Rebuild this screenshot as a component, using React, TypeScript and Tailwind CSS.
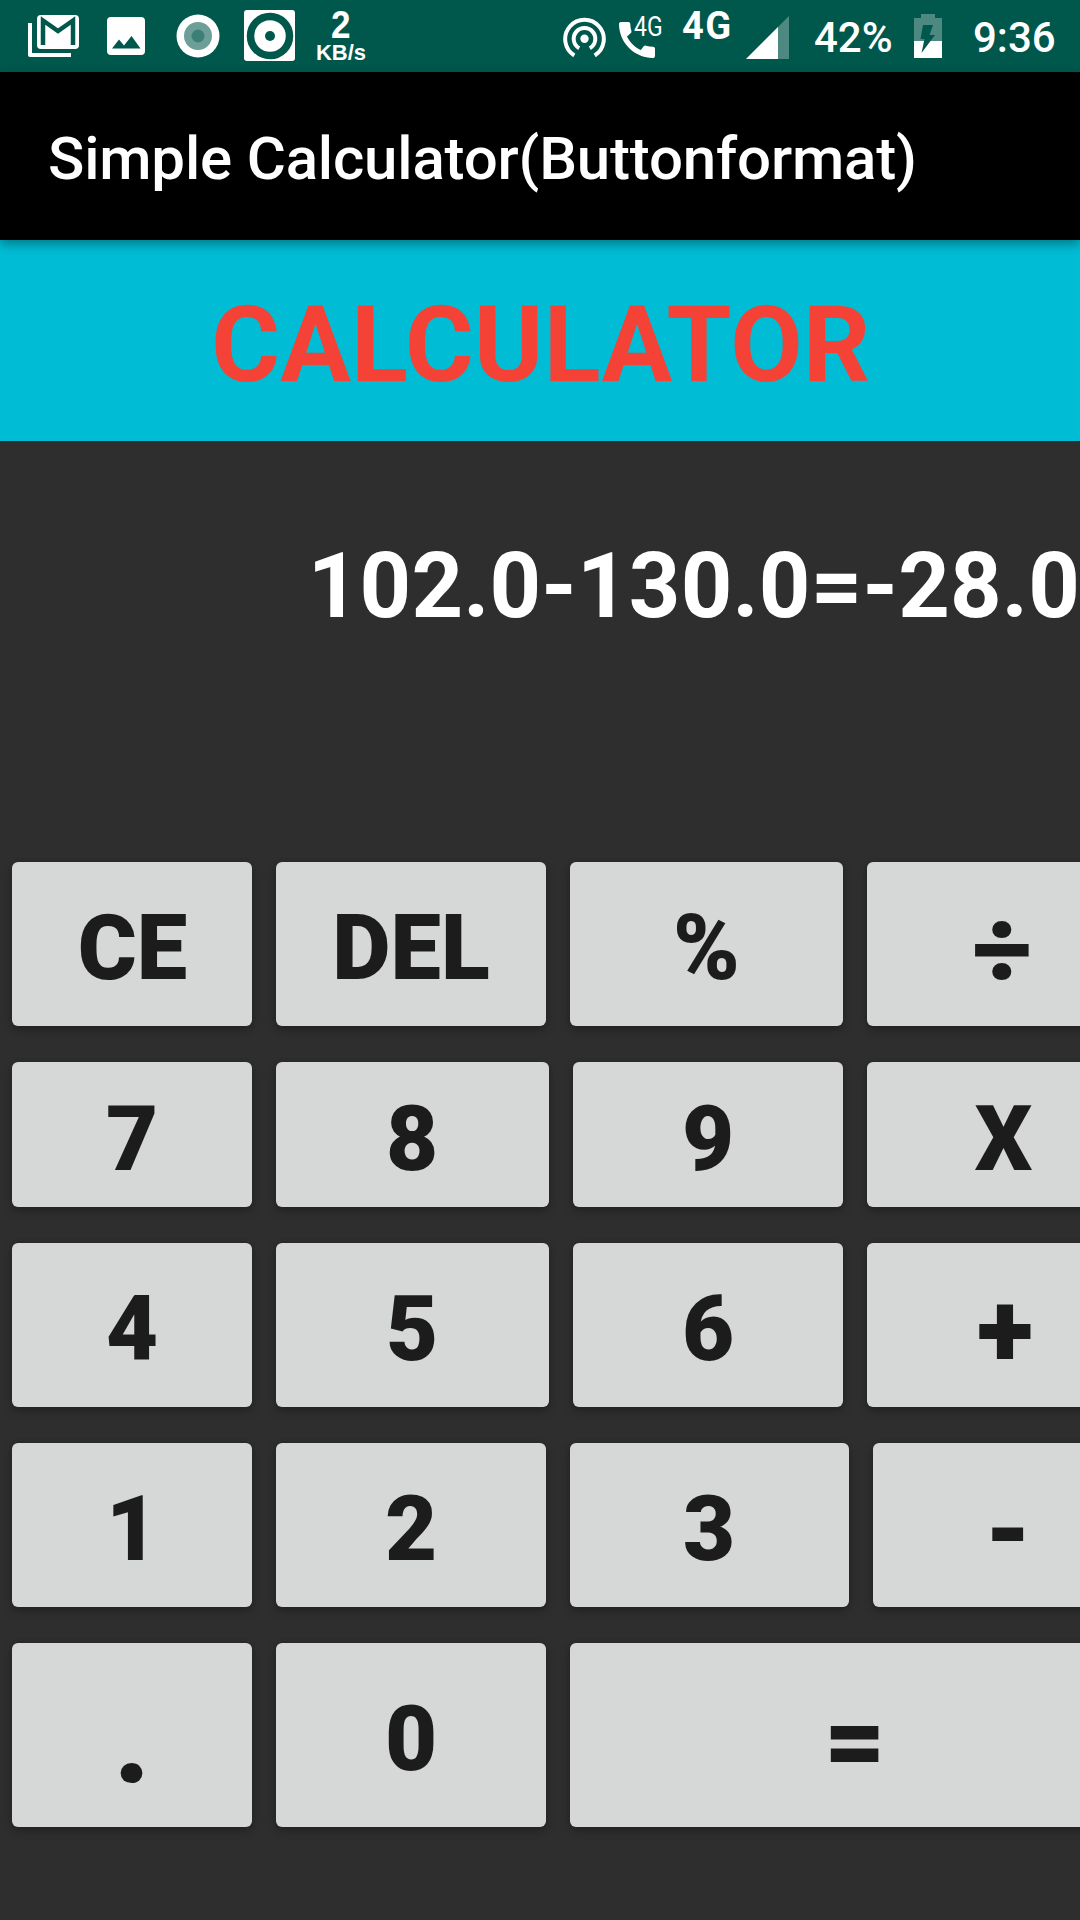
import React from "react";

type Key = { label: string; width: string; size?: string; pad?: string };
type Row = { height: string; keys: Key[] };

const rows: Row[] = [
  {
    height: "h-[164px]",
    keys: [
      { label: "CE", width: "w-[240px]", pad: "pt-2.5 pl-px" },
      { label: "DEL", width: "w-[270px]" },
      { label: "%", width: "w-[273px]" },
      { label: "÷", width: "w-[270px]", size: "text-[105px]", pad: "pt-3" },
    ],
  },
  {
    height: "h-[145px]",
    keys: [
      { label: "7", width: "w-[240px]" },
      { label: "8", width: "w-[273px]", pad: "pt-2.5 pr-px" },
      { label: "9", width: "w-[270px]" },
      { label: "X", width: "w-[273px]" },
    ],
  },
  {
    height: "h-[164px]",
    keys: [
      { label: "4", width: "w-[240px]" },
      { label: "5", width: "w-[273px]", pad: "pt-2.5 pr-px" },
      { label: "6", width: "w-[270px]" },
      { label: "+", width: "w-[276px]", size: "text-[105px]", pad: "pt-3" },
    ],
  },
  {
    height: "h-[164px]",
    keys: [
      { label: "1", width: "w-[240px]" },
      { label: "2", width: "w-[270px]" },
      { label: "3", width: "w-[279px]", pad: "pt-2.5 pr-px" },
      { label: "-", width: "w-[270px]", size: "text-[105px]", pad: "pt-3" },
    ],
  },
  {
    height: "h-[184px]",
    keys: [
      { label: ".", width: "w-[240px]", size: "text-[120px]", pad: "pt-3" },
      { label: "0", width: "w-[270px]" },
      { label: "=", width: "w-[570px]", size: "text-[105px]", pad: "pt-3" },
    ],
  },
];

function StatusBar() {
  return (
    <div className="flex h-[72px] w-full shrink-0 items-start bg-[#00574b] pl-7 text-white">
      <svg className="mt-[15px] shrink-0" width="51" height="42" viewBox="0 0 51 42" fill="none">
        <path d="M2 8v32h41" stroke="#fff" strokeWidth="4" strokeLinejoin="round" />
        <rect x="9" y="0" width="42" height="34" rx="4" fill="#fff" />
        <path d="M15 30V5.500L30 16 45 5.500V30" stroke="#00574b" strokeWidth="4.500" />
      </svg>
      <svg className="mt-[17px] ml-7 shrink-0" width="38" height="38" viewBox="0 0 38 38">
        <rect width="38" height="38" rx="4" fill="#fff" />
        <path d="M5 31.500l7-9 5 6 7.500-9.500 9 12.500z" fill="#00574b" />
      </svg>
      <svg className="mt-[14px] ml-[31px] shrink-0" width="44" height="44" viewBox="0 0 44 44">
        <circle cx="22" cy="22" r="21.500" fill="#fff" />
        <circle cx="22" cy="22" r="14" fill="#6d9f98" />
        <circle cx="22" cy="22" r="6.500" fill="#3c7f76" />
      </svg>
      <svg className="mt-[10px] ml-6 shrink-0" width="51" height="51" viewBox="0 0 51 51">
        <rect width="51" height="51" rx="3" fill="#fff" />
        <circle cx="26" cy="26" r="19.500" fill="none" stroke="#00574b" strokeWidth="7.500" />
        <circle cx="26" cy="26" r="5" fill="#00574b" />
      </svg>
      <div className="ml-5 flex w-[52px] shrink-0 flex-col items-center font-['Liberation_Sans'] font-bold">
        <span className="mt-[7px] h-[35px] scale-x-90 text-[39px] leading-[36px]">2</span>
        <span className="h-5 text-[22px] leading-[21px]">KB/s</span>
      </div>
      <svg className="mt-[17px] ml-[196px] shrink-0" width="43" height="42" viewBox="0 0 43 42" fill="none" stroke="#fff" strokeWidth="4">
        <path d="M11.300 38.500A19.300 19.300 0 1 1 31.700 38.500" />
        <path d="M16.200 31.200A10.800 10.800 0 1 1 26.800 31.200" />
        <circle cx="21.500" cy="21.700" r="4.200" fill="#fff" stroke="none" />
      </svg>
      <div className="relative mt-[22px] ml-[13px] h-9 w-[44px] shrink-0">
        <svg width="36" height="36" viewBox="3 3 18 18" fill="#fff">
          <path d="M20.010 15.380c-1.230 0-2.420-.2-3.530-.56-.35-.12-.74-.03-1.010.24l-1.570 1.970c-2.830-1.350-5.480-3.900-6.890-6.830l1.950-1.660c.27-.28.35-.67.24-1.020-.37-1.110-.56-2.300-.56-3.530 0-.54-.45-.99-.99-.99H4.190C3.650 3 3 3.240 3 3.990 3 13.280 10.730 21 20.010 21c.71 0 .99-.63.99-1.180v-3.450c0-.54-.45-.99-.99-.99z" />
        </svg>
        <span className="absolute -top-[11px] left-[15px] origin-left scale-x-[.82] text-[28px] leading-8">4G</span>
      </div>
      <span className="mt-1 ml-[19px] w-[49px] shrink-0 text-[38px] leading-[44px] font-bold tracking-[1.500px]">4G</span>
      <svg className="mt-4 ml-[15px] shrink-0" width="43" height="43" viewBox="0 0 43 43">
        <path d="M0 43L43 0V43z" fill="#4d8981" />
        <path d="M0 43L32 11V43z" fill="#fff" />
      </svg>
      <span className="mt-[13px] ml-[25px] w-[80px] shrink-0 text-[42px] leading-[49px] font-medium">42%</span>
      <svg className="mt-[14px] ml-5 shrink-0" width="28" height="44" viewBox="0 0 28 44">
        <path d="M7 0h14v4h7v23H0V4h7z" fill="#4d8981" />
        <path d="M0 27h28v17H0z" fill="#fff" />
        <path d="M9 11h10l-3.500 10H21L7.500 39l3-14H6.500z" fill="#00574b" />
      </svg>
      <span className="mt-[13px] ml-[31px] shrink-0 text-[42px] leading-[49px] font-medium">9:36</span>
    </div>
  );
}

function KeyButton({ label, width, size = "text-[90px]", pad = "pt-2.5" }: Key) {
  return (
    <button
      className={`${width} ${size} ${pad} flex h-full shrink-0 items-center justify-center rounded-[6px] bg-[#d6d8d7] leading-none font-black text-[#1c1c1c] shadow-[0_4px_8px_rgba(0,0,0,0.25),0_0_4px_rgba(0,0,0,0.1)]`}
    >
      {label}
    </button>
  );
}

export default function App() {
  return (
    <div className="flex h-[1920px] w-[1080px] flex-col overflow-hidden bg-[#2e2e2e] font-[Roboto,sans-serif]">
      <StatusBar />
      <header className="relative z-10 flex h-[168px] shrink-0 items-center bg-black pl-12 shadow-[0_4px_10px_rgba(0,0,0,0.36)]">
        <h1 className="pt-1.5 text-[60px] leading-[70px] font-medium tracking-[-0.180px] whitespace-nowrap text-white">
          Simple Calculator(Buttonformat)
        </h1>
      </header>
      <div className="flex h-[201px] shrink-0 items-center justify-center bg-[#00bcd4]">
        <h2 className="pt-[9px] pl-0.5 text-[105px] leading-[123px] font-bold tracking-[0.350px] text-[#f44336]">CALCULATOR</h2>
      </div>
      <div className="flex h-[421px] shrink-0 items-start justify-end pt-[93px]">
        <output className="text-[90px] leading-[106px] font-bold tracking-[0.200px] whitespace-nowrap text-white">
          102.0-130.0=-28.0
        </output>
      </div>
      <main className="flex flex-col gap-9 pl-3">
        {rows.map((row) => (
          <div key={row.keys[0].label} className={`${row.height} flex gap-6`}>
            {row.keys.map((key) => (
              <KeyButton key={key.label} {...key} />
            ))}
          </div>
        ))}
      </main>
    </div>
  );
}
